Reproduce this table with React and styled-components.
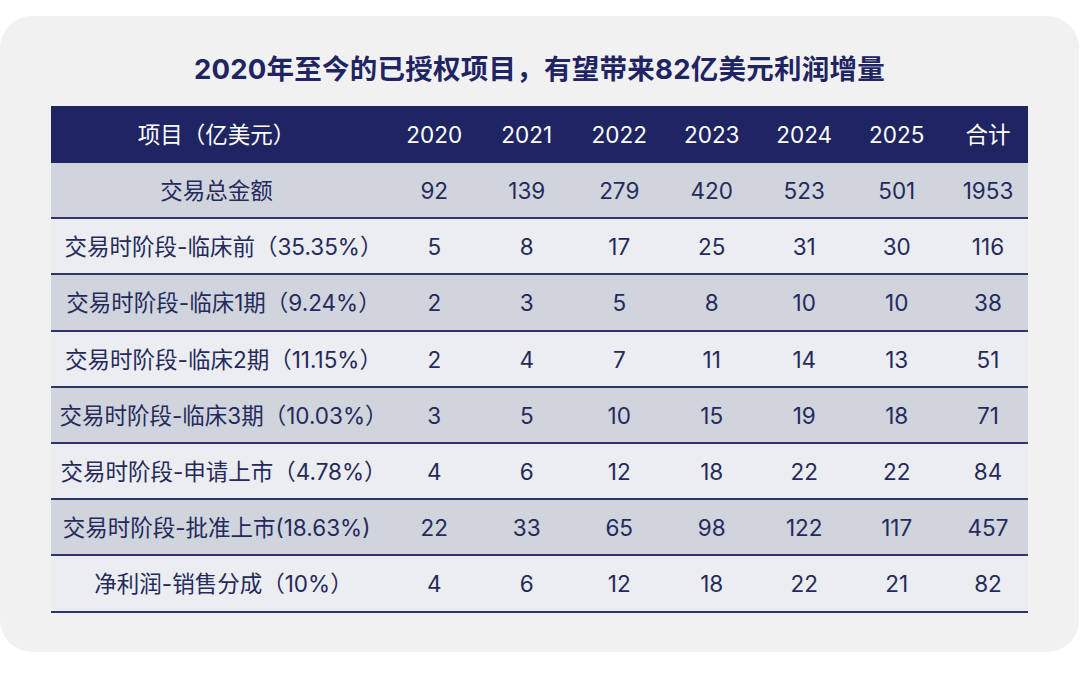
import React from "react";
import styled, { createGlobalStyle } from "styled-components";

const Global = createGlobalStyle`
  html, body { margin: 0; padding: 0; background: #ffffff; }
  body { font-family: Inter, "Noto Sans CJK SC", sans-serif; }
`;

const Page = styled.div`
  width: 1080px;
  height: 688px;
  padding-top: 16px;
  box-sizing: border-box;
  background: #ffffff;
`;

const Card = styled.section`
  width: 1079px;
  height: 636px;
  box-sizing: border-box;
  background: #f1f1f2;
  border-radius: 32px;
  padding: 35px 51px 0 51px;
  display: flex;
  flex-direction: column;
  align-items: stretch;
`;

const Title = styled.h1`
  margin: 0 0 18px 0;
  text-align: center;
  font-family: Inter, "Noto Sans CJK SC", sans-serif;
  font-size: 27.5px;
  line-height: 37px;
  font-weight: 700;
  color: #1f2462;
  letter-spacing: 0.25px;
`;

const COLS = "337px repeat(6, 92.5px) 85px";

const Table = styled.div`
  width: 977px;
`;

const HeaderRow = styled.div`
  display: grid;
  grid-template-columns: ${COLS};
  height: 57px;
  background: #1f2462;
  align-items: center;
`;

const Row = styled.div`
  display: grid;
  grid-template-columns: ${COLS};
  height: 56.2px;
  box-sizing: border-box;
  border-bottom: 2px solid #2f3569;
  background: ${(p) => (p.$shade ? "#d0d4dd" : "#ebedf0")};
  align-items: center;
`;

const Cell = styled.div`
  text-align: center;
  font-size: 22.5px;
  line-height: 30px;
  white-space: nowrap;
  color: ${(p) => (p.$head ? "#ffffff" : "#252a5c")};
  padding-top: ${(p) => (p.$head ? "0" : "2px")};
`;

const LabelCell = styled(Cell)`
  padding-left: ${(p) => (p.$paren ? "8px" : "0")};
  padding-right: ${(p) => (p.$paren ? "0" : "6px")};
`;

const TotalCell = styled(Cell)`
  padding-left: 5px;
`;

const headers = ["项目（亿美元）", "2020", "2021", "2022", "2023", "2024", "2025", "合计"];

const rows = [
  ["交易总金额", 92, 139, 279, 420, 523, 501, 1953],
  ["交易时阶段-临床前（35.35%）", 5, 8, 17, 25, 31, 30, 116],
  ["交易时阶段-临床1期（9.24%）", 2, 3, 5, 8, 10, 10, 38],
  ["交易时阶段-临床2期（11.15%）", 2, 4, 7, 11, 14, 13, 51],
  ["交易时阶段-临床3期（10.03%）", 3, 5, 10, 15, 19, 18, 71],
  ["交易时阶段-申请上市（4.78%）", 4, 6, 12, 18, 22, 22, 84],
  ["交易时阶段-批准上市(18.63%)", 22, 33, 65, 98, 122, 117, 457],
  ["净利润-销售分成（10%）", 4, 6, 12, 18, 22, 21, 82],
];

function renderCell(v, ci, head) {
  if (ci === 0) {
    const paren = !head && String(v).endsWith("）");
    return (
      <LabelCell key={ci} $head={head} $paren={paren}>
        {v}
      </LabelCell>
    );
  }
  if (ci === 7) return <TotalCell key={ci} $head={head}>{v}</TotalCell>;
  return <Cell key={ci} $head={head}>{v}</Cell>;
}

export default function App() {
  return (
    <>
      <Global />
      <Page>
        <Card>
          <Title>2020年至今的已授权项目，有望带来82亿美元利润增量</Title>
          <Table>
            <HeaderRow>{headers.map((h, i) => renderCell(h, i, true))}</HeaderRow>
            {rows.map((r, ri) => (
              <Row key={r[0]} $shade={ri % 2 === 0}>
                {r.map((v, ci) => renderCell(v, ci, false))}
              </Row>
            ))}
          </Table>
        </Card>
      </Page>
    </>
  );
}
